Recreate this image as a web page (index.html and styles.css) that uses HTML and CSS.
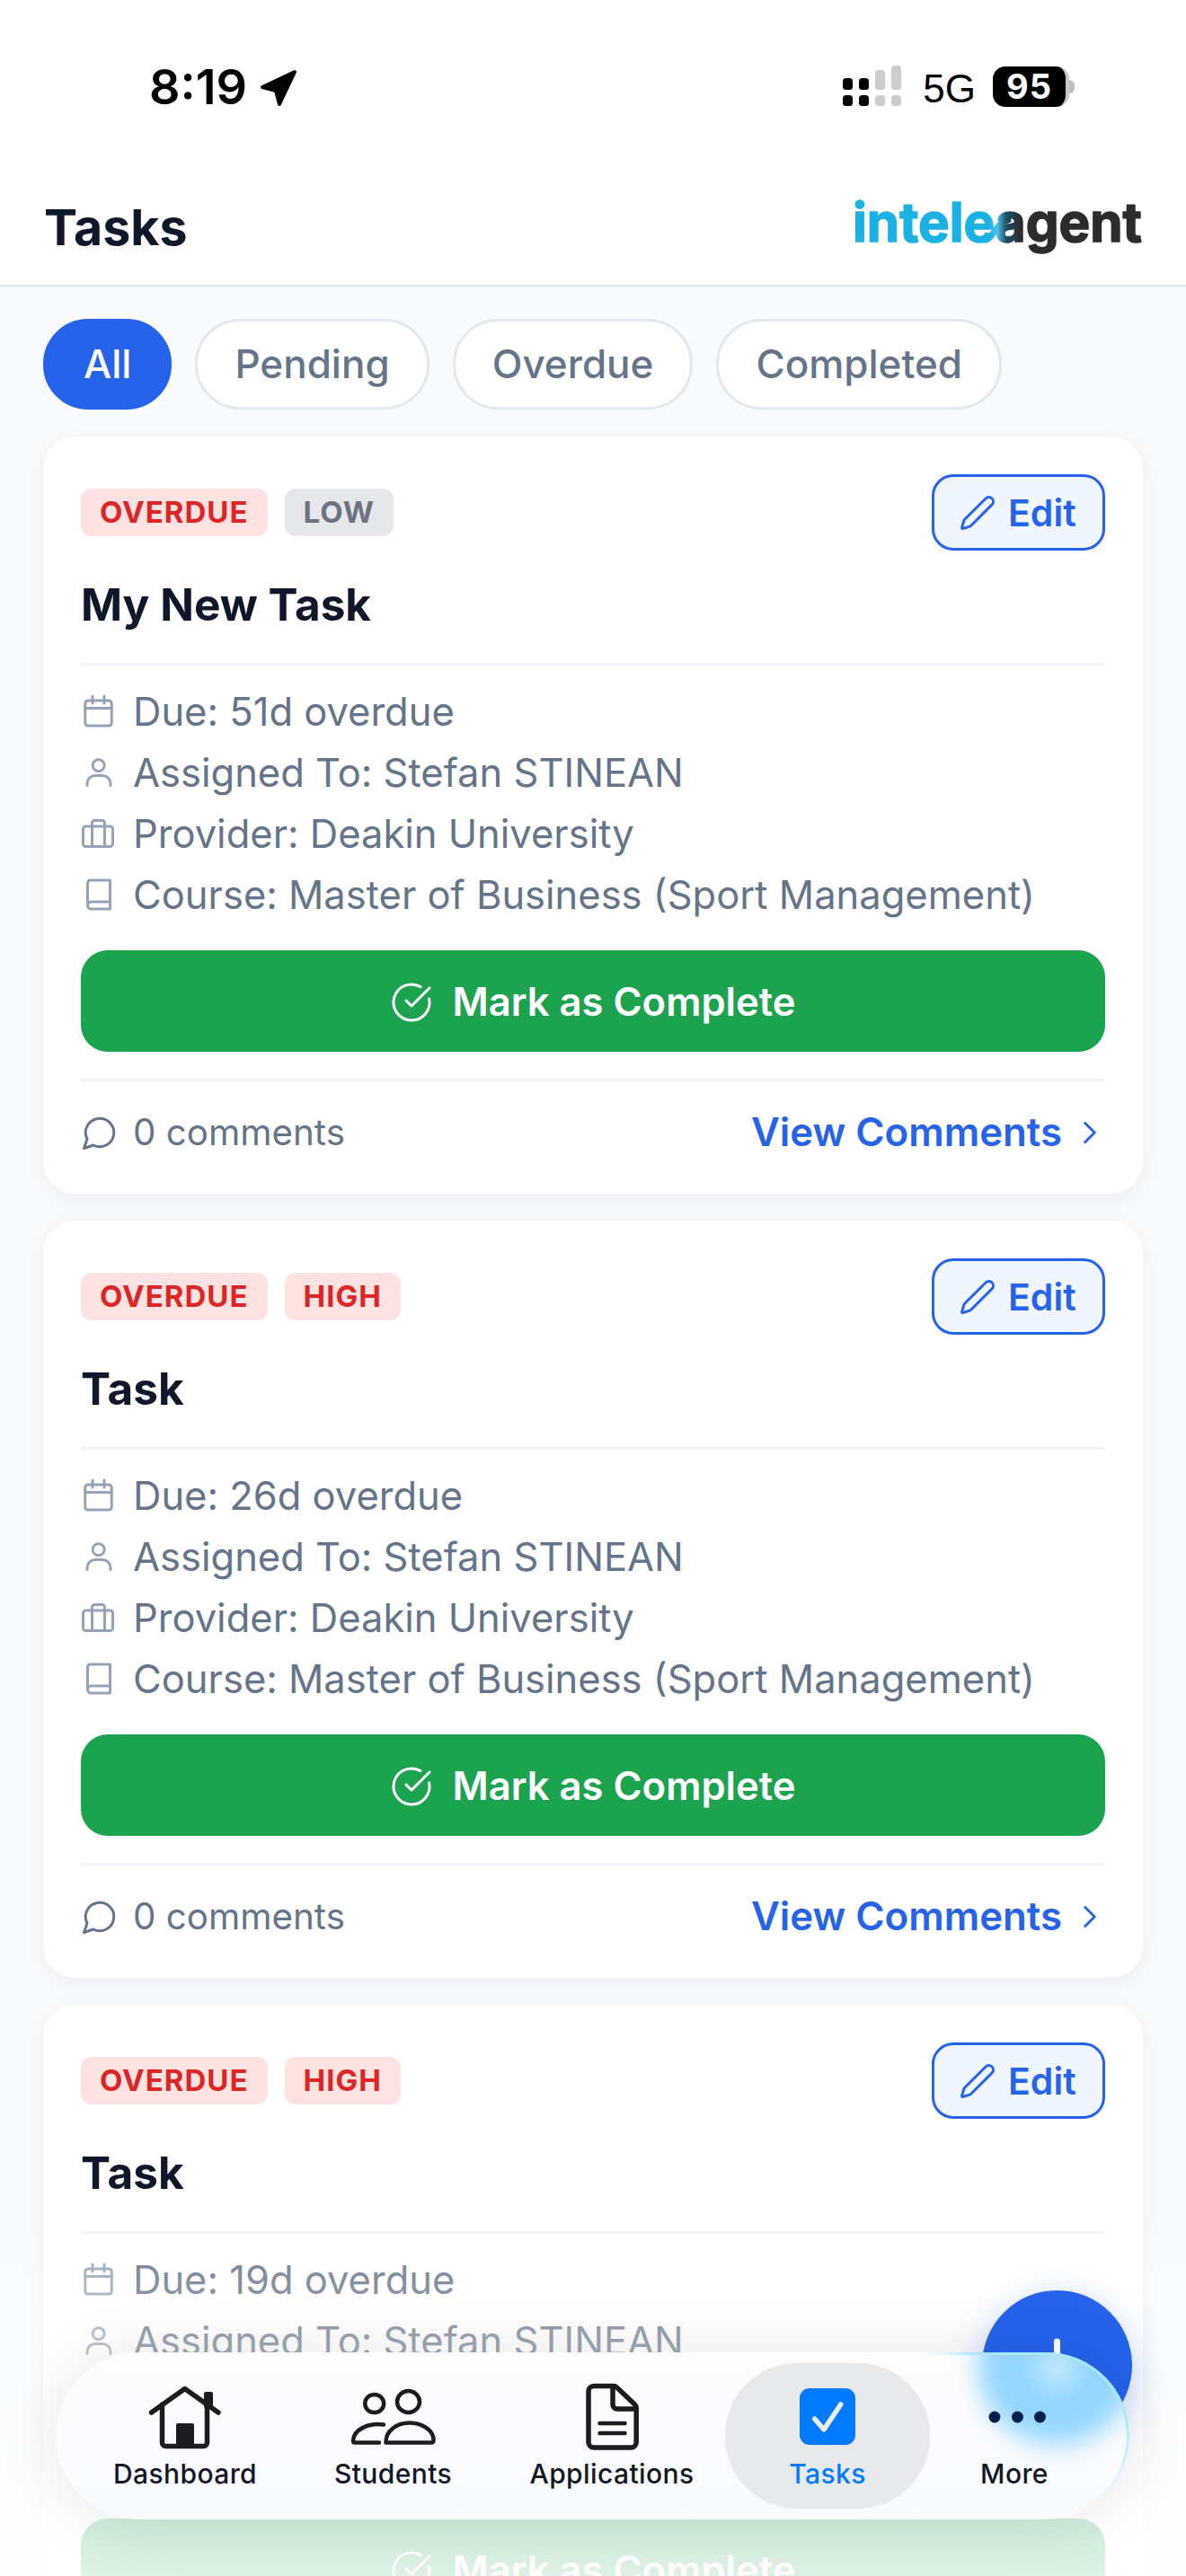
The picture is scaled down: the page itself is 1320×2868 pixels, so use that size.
FILE: index.html
```html
<!DOCTYPE html>
<html lang="en">
<head>
<meta charset="utf-8">
<title>Tasks</title>
<link rel="stylesheet" href="styles.css">
</head>
<body>
<div class="page">
  <header class="top">
    <div class="status">
      <div class="status-left">
        <span class="time">8:19</span>
        <svg class="loc" width="42" height="44" viewBox="0 0 42 44"><path d="M39 4 3 21l15 4 4 15z"/></svg>
      </div>
      <div class="status-right">
        <svg class="signal" width="65" height="46" viewBox="0 0 65 46">
          <rect class="on" x="0" y="14" width="11" height="13" rx="3.5"/><rect class="on" x="18" y="14" width="11" height="13" rx="3.5"/>
          <rect class="off" x="36" y="5" width="11" height="22" rx="3.5"/><rect class="off" x="54" y="0" width="11" height="27" rx="3.5"/>
          <rect class="on" x="0" y="33" width="11" height="12" rx="3.5"/><rect class="on" x="18" y="33" width="11" height="12" rx="3.5"/>
          <rect class="off" x="36" y="33" width="11" height="12" rx="3.5"/><rect class="off" x="54" y="33" width="11" height="12" rx="3.5"/>
        </svg>
        <span class="net">5G</span>
        <span class="battery"><span class="battery-level">95</span></span>
      </div>
    </div>
    <div class="titlebar">
      <h1 class="page-title">Tasks</h1>
      <svg class="logo" width="324" height="62" viewBox="0 0 324 62">
        <defs>
          <linearGradient id="logoGrad" gradientUnits="userSpaceOnUse" x1="0" y1="0" x2="324" y2="0">
            <stop offset="0" stop-color="#1cb1e3"/>
            <stop offset="0.47" stop-color="#1cb1e3"/>
            <stop offset="0.5" stop-color="#4fc3ea"/>
            <stop offset="0.53" stop-color="#1d4f66"/>
            <stop offset="0.58" stop-color="#2c2c2c"/>
            <stop offset="1" stop-color="#2c2c2c"/>
          </linearGradient>
        </defs>
        <text class="logo-text" x="1" y="47" textLength="322" lengthAdjust="spacingAndGlyphs" fill="url(#logoGrad)" stroke="url(#logoGrad)">inteleagent</text>
        <path class="logo-link" d="M148 45C157 46 160 25 174 23" stroke="url(#logoGrad)"/>
      </svg>
    </div>
  </header>

  <main class="content">
    <nav class="filters">
      <span class="pill pill-active">All</span>
      <span class="pill">Pending</span>
      <span class="pill">Overdue</span>
      <span class="pill">Completed</span>
    </nav>

    <article class="card">
      <div class="card-top">
        <div class="badges"><span class="badge badge-red">OVERDUE</span><span class="badge badge-grey">LOW</span></div>
        <button class="edit"><svg class="ico" width="42" height="42" viewBox="0 0 24 24"><path d="M21.174 6.812a1 1 0 0 0-3.986-3.987L3.842 16.174a2 2 0 0 0-.5.83l-1.321 4.352a.5.5 0 0 0 .623.622l4.353-1.32a2 2 0 0 0 .83-.497z"/></svg>Edit</button>
      </div>
      <h2 class="card-title">My New Task</h2>
      <div class="rule rule-title"></div>
      <ul class="meta">
        <li class="meta-row"><svg class="mi" width="42" height="42" viewBox="0 0 42 42"><rect x="4.8" y="9" width="29.4" height="28" rx="3"/><path d="M4.8 17.5h29.4M13 4v8M26 4v8"/></svg>Due: 51d overdue</li>
        <li class="meta-row"><svg class="mi" width="42" height="42" viewBox="0 0 42 42"><circle cx="19.7" cy="13.2" r="6.5"/><path d="M7 35.5v-2a9 9 0 0 1 9-9h8a9 9 0 0 1 9 9v2"/></svg>Assigned To: Stefan STINEAN</li>
        <li class="meta-row"><svg class="mi" width="42" height="42" viewBox="0 0 42 42"><rect x="2.5" y="13" width="33" height="22.5" rx="3"/><path d="M12.5 35.5V9.5a3 3 0 0 1 3-3h8a3 3 0 0 1 3 3v26"/></svg>Provider: Deakin University</li>
        <li class="meta-row"><svg class="mi" width="42" height="42" viewBox="0 0 42 42"><path d="M7.5 33V8a3 3 0 0 1 3-3h22v32H11.5a4 4 0 0 1-4-4 4 4 0 0 1 4-4h21"/></svg>Course: Master of Business (Sport Management)</li>
      </ul>
      <button class="complete"><svg class="ico" width="48" height="48" viewBox="0 0 24 24"><path d="M21.801 10A10 10 0 1 1 17 3.335"/><path d="m9 11 3 3L22 4"/></svg>Mark as Complete</button>
      <div class="rule rule-foot"></div>
      <div class="card-foot">
        <span class="comments"><svg class="ico" width="42" height="42" viewBox="0 0 24 24"><path d="M7.9 20A9 9 0 1 0 4 16.1L2 22Z"/></svg>0 comments</span>
        <span class="view">View Comments<svg class="ico" width="42" height="42" viewBox="0 0 24 24"><path d="m9 18 6-6-6-6"/></svg></span>
      </div>
    </article>

    <article class="card">
      <div class="card-top">
        <div class="badges"><span class="badge badge-red">OVERDUE</span><span class="badge badge-red">HIGH</span></div>
        <button class="edit"><svg class="ico" width="42" height="42" viewBox="0 0 24 24"><path d="M21.174 6.812a1 1 0 0 0-3.986-3.987L3.842 16.174a2 2 0 0 0-.5.83l-1.321 4.352a.5.5 0 0 0 .623.622l4.353-1.32a2 2 0 0 0 .83-.497z"/></svg>Edit</button>
      </div>
      <h2 class="card-title">Task</h2>
      <div class="rule rule-title"></div>
      <ul class="meta">
        <li class="meta-row"><svg class="mi" width="42" height="42" viewBox="0 0 42 42"><rect x="4.8" y="9" width="29.4" height="28" rx="3"/><path d="M4.8 17.5h29.4M13 4v8M26 4v8"/></svg>Due: 26d overdue</li>
        <li class="meta-row"><svg class="mi" width="42" height="42" viewBox="0 0 42 42"><circle cx="19.7" cy="13.2" r="6.5"/><path d="M7 35.5v-2a9 9 0 0 1 9-9h8a9 9 0 0 1 9 9v2"/></svg>Assigned To: Stefan STINEAN</li>
        <li class="meta-row"><svg class="mi" width="42" height="42" viewBox="0 0 42 42"><rect x="2.5" y="13" width="33" height="22.5" rx="3"/><path d="M12.5 35.5V9.5a3 3 0 0 1 3-3h8a3 3 0 0 1 3 3v26"/></svg>Provider: Deakin University</li>
        <li class="meta-row"><svg class="mi" width="42" height="42" viewBox="0 0 42 42"><path d="M7.5 33V8a3 3 0 0 1 3-3h22v32H11.5a4 4 0 0 1-4-4 4 4 0 0 1 4-4h21"/></svg>Course: Master of Business (Sport Management)</li>
      </ul>
      <button class="complete"><svg class="ico" width="48" height="48" viewBox="0 0 24 24"><path d="M21.801 10A10 10 0 1 1 17 3.335"/><path d="m9 11 3 3L22 4"/></svg>Mark as Complete</button>
      <div class="rule rule-foot"></div>
      <div class="card-foot">
        <span class="comments"><svg class="ico" width="42" height="42" viewBox="0 0 24 24"><path d="M7.9 20A9 9 0 1 0 4 16.1L2 22Z"/></svg>0 comments</span>
        <span class="view">View Comments<svg class="ico" width="42" height="42" viewBox="0 0 24 24"><path d="m9 18 6-6-6-6"/></svg></span>
      </div>
    </article>

    <article class="card">
      <div class="card-top">
        <div class="badges"><span class="badge badge-red">OVERDUE</span><span class="badge badge-red">HIGH</span></div>
        <button class="edit"><svg class="ico" width="42" height="42" viewBox="0 0 24 24"><path d="M21.174 6.812a1 1 0 0 0-3.986-3.987L3.842 16.174a2 2 0 0 0-.5.83l-1.321 4.352a.5.5 0 0 0 .623.622l4.353-1.32a2 2 0 0 0 .83-.497z"/></svg>Edit</button>
      </div>
      <h2 class="card-title">Task</h2>
      <div class="rule rule-title"></div>
      <ul class="meta">
        <li class="meta-row"><svg class="mi" width="42" height="42" viewBox="0 0 42 42"><rect x="4.8" y="9" width="29.4" height="28" rx="3"/><path d="M4.8 17.5h29.4M13 4v8M26 4v8"/></svg>Due: 19d overdue</li>
        <li class="meta-row"><svg class="mi" width="42" height="42" viewBox="0 0 42 42"><circle cx="19.7" cy="13.2" r="6.5"/><path d="M7 35.5v-2a9 9 0 0 1 9-9h8a9 9 0 0 1 9 9v2"/></svg>Assigned To: Stefan STINEAN</li>
        <li class="meta-row"><svg class="mi" width="42" height="42" viewBox="0 0 42 42"><rect x="2.5" y="13" width="33" height="22.5" rx="3"/><path d="M12.5 35.5V9.5a3 3 0 0 1 3-3h8a3 3 0 0 1 3 3v26"/></svg>Provider: Deakin University</li>
        <li class="meta-row"><svg class="mi" width="42" height="42" viewBox="0 0 42 42"><path d="M7.5 33V8a3 3 0 0 1 3-3h22v32H11.5a4 4 0 0 1-4-4 4 4 0 0 1 4-4h21"/></svg>Course: Master of Business (Sport Management)</li>
      </ul>
      <button class="complete"><svg class="ico" width="48" height="48" viewBox="0 0 24 24"><path d="M21.801 10A10 10 0 1 1 17 3.335"/><path d="m9 11 3 3L22 4"/></svg>Mark as Complete</button>
    </article>
  </main>

  <div class="fade"></div>

  <button class="fab"><svg width="167" height="167" viewBox="0 0 167 167"><path d="M83.5 57v53M57 83.5h53"/></svg></button>

  <nav class="tabbar">
    <div class="glow"></div>
    <div class="glow-spot"></div>
    <div class="rim"></div>
    <div class="tabs">
      <div class="tab">
        <svg class="tab-icon" width="100" height="76" viewBox="0 0 100 76">
          <path class="ts" d="M12.5 33 49.7 6.5 87 33"/>
          <path class="ts" d="M24.5 24v42.5a4 4 0 0 0 4 4h42a4 4 0 0 0 4-4V24"/>
          <rect class="tf" x="71" y="10" width="10" height="18" rx="2"/>
          <rect class="tf" x="40" y="45" width="20" height="25" rx="2"/>
        </svg>
        <span class="tab-label">Dashboard</span>
      </div>
      <div class="tab">
        <svg class="tab-icon" width="100" height="76" viewBox="0 0 100 76">
          <ellipse class="ts thin" cx="28.7" cy="23" rx="10.5" ry="10"/>
          <ellipse class="ts thin" cx="66.5" cy="21" rx="12.5" ry="12"/>
          <path class="ts thin" d="M39 46.5C22 44 5.500 52 5 64.500q0 2 2 2H34"/>
          <path class="ts thin" d="M41.500 66.500C41 53 54 44.500 68 44.500 82 44.500 95 53 94.500 64q0 2.500-2.500 2.500Z"/>
        </svg>
        <span class="tab-label">Students</span>
      </div>
      <div class="tab">
        <svg class="tab-icon" width="100" height="76" viewBox="0 0 100 76">
          <path class="ts" d="M30 3.500H52a5 5 0 0 1 3.500 1.500L75.500 24a6 6 0 0 1 1.700 4V66a6 6 0 0 1-6 6H30a6 6 0 0 1-6-6V9.500a6 6 0 0 1 6-6Z"/>
          <path class="ts" d="M51 5V24a5 5 0 0 0 5 5H76"/>
          <path class="ts thin" d="M36.500 45H64.500M36.500 56H64.500"/>
        </svg>
        <span class="tab-label">Applications</span>
      </div>
      <div class="tab tab-active">
        <svg class="tab-icon" width="100" height="76" viewBox="0 0 100 76">
          <rect x="19" y="6" width="62" height="63" rx="11" fill="#007aff"/>
          <path class="check" d="M35.700 40 46 52 64.700 24"/>
        </svg>
        <span class="tab-label">Tasks</span>
      </div>
      <div class="tab">
        <svg class="tab-icon tab-more" width="100" height="76" viewBox="0 0 100 76">
          <circle cx="28" cy="38" r="6.500"/><circle cx="53.500" cy="38" r="6.500"/><circle cx="78.500" cy="38" r="6.500"/>
        </svg>
        <span class="tab-label">More</span>
      </div>
    </div>
  </nav>
</div>
</body>
</html>
```

FILE: styles.css
```css
* { box-sizing: border-box; }
html, body { margin: 0; padding: 0; width: 1320px; height: 2868px; overflow: hidden; }
body { font-family: "Inter", "Liberation Sans", sans-serif; background: #f8fafc; color: #0f172a; }
button { font-family: inherit; border: 0; padding: 0; margin: 0; }
ul { list-style: none; margin: 0; padding: 0; }
h1, h2 { margin: 0; }

.page { position: relative; width: 1320px; height: 2868px; overflow: hidden; }

/* header */
.top { background: #fff; border-bottom: 2px solid #e2e8f0; height: 319px; }
.status { display: flex; justify-content: space-between; padding: 74px 130px 0 166px; height: 120px; }
.status-left { display: flex; align-items: flex-start; gap: 14px; height: 46px; }
.time { font-size: 54px; font-weight: 600; line-height: 46px; color: #000; }
.loc { fill: #000; stroke: #000; stroke-width: 4; stroke-linejoin: round; margin-top: 2px; }
.status-right { display: flex; align-items: flex-start; height: 46px; }
.signal { margin-top: -1px; }
.signal .on { fill: #000; }
.signal .off { fill: #cccccc; }
.net { font-family: "Liberation Sans", sans-serif; font-size: 44px; line-height: 46px; color: #000; margin-left: 24px; margin-top: 2px; }
.battery { display: block; position: relative; margin-left: 19px; width: 85px; height: 45px; background: #000; border-radius: 14px; border-right: 4px solid #c8c8c8; }
.battery::after { content: ""; position: absolute; left: 85px; top: 15px; width: 6px; height: 15px; background: #bdbdbd; border-radius: 0 6px 6px 0; }
.battery-level { display: block; color: #fff; font-size: 38px; font-weight: 700; line-height: 44px; text-align: center; letter-spacing: 1px; }

.titlebar { display: flex; justify-content: space-between; align-items: flex-start; padding: 98px 48px 0 49px; height: 197px; }
.page-title { font-size: 55.5px; line-height: 70px; font-weight: 700; color: #0f172a; }
.logo { margin-top: 4px; display: block; }
.logo-text { font-family: "Inter", "Liberation Sans", sans-serif; font-size: 60px; font-weight: 700; stroke-width: 1.5; stroke-linejoin: round; }
.logo-link { fill: none; stroke-width: 7; stroke-linecap: round; }

/* filters */
.content { padding: 36px 48px 0; }
.filters { display: flex; gap: 26px; }
.pill { display: block; height: 101px; line-height: 95px; padding: 0 41px; border: 3px solid #e2e8f0; background: #fff; border-radius: 50px; font-size: 44px; font-weight: 500; color: #64748b; }
.pill-active { background: #2563eb; border-color: #2563eb; color: #fff; padding: 0 42px; }

/* cards */
.card { background: #fff; border-radius: 36px; padding: 42px; margin-top: 30px; box-shadow: 0 6px 24px rgba(15, 23, 42, .05); height: 843px; }
.card-top { display: flex; justify-content: space-between; align-items: center; height: 85px; }
.badges { display: flex; gap: 19px; }
.badge { display: block; height: 53px; line-height: 53px; padding: 0 21px; border-radius: 12px; font-size: 33px; font-weight: 700; letter-spacing: 1px; }
.badge-red { background: #fee2e2; color: #dc2626; }
.badge-grey { background: #e5e7eb; color: #6b7280; }

.ico { fill: none; stroke: currentColor; stroke-width: 1.7; stroke-linecap: round; stroke-linejoin: round; flex: none; }
.edit { display: flex; align-items: center; gap: 13px; height: 85px; width: 193px; padding-left: 27px; background: #eff6ff; border: 3px solid #2563eb; border-radius: 24px; color: #2563eb; font-size: 41px; font-weight: 600; }

.card-title { font-size: 49.5px; line-height: 60px; font-weight: 700; margin-top: 30px; color: #0f172a; }
.rule { height: 3px; background: #f1f5f9; }
.rule-title { margin-top: 35px; }
.rule-foot { margin-top: 30px; }

.meta { margin-top: 17px; }
.meta-row { display: flex; align-items: center; height: 68px; gap: 16px; font-size: 43.5px; color: #64748b; }
.mi { fill: none; stroke: #94a3b8; stroke-width: 3; stroke-linecap: round; stroke-linejoin: round; flex: none; }

.complete { display: flex; align-items: center; justify-content: center; gap: 21px; width: 100%; height: 113px; padding-top: 2px; margin-top: 28px; background: #1ba34d; border-radius: 30px; color: #fff; font-size: 43.6px; font-weight: 600; }
.complete .ico { stroke-width: 1.5; }

.card-foot { display: flex; justify-content: space-between; align-items: center; height: 53px; margin-top: 30px; }
.comments { display: flex; align-items: center; gap: 16px; font-size: 40.3px; color: #64748b; }
.view { display: flex; align-items: center; gap: 10px; font-size: 43.8px; font-weight: 600; color: #2563eb; margin-right: -4px; }

/* bottom overlays */
.fade { position: absolute; left: 0; right: 0; top: 2450px; bottom: 0; background: linear-gradient(to bottom, rgba(255,255,255,0), rgba(255,255,255,.8) 85%, rgba(255,255,255,.86)); }

.fab { position: absolute; left: 1093px; top: 2550px; width: 167px; height: 167px; border-radius: 50%; background: #2563eb; box-shadow: 0 10px 40px rgba(37, 99, 235, .3); }
.fab svg { display: block; fill: none; stroke: #fff; stroke-width: 7; stroke-linecap: round; }

.tabbar { position: absolute; left: 62px; top: 2619px; width: 1195px; height: 186px; border-radius: 93px; overflow: hidden; background: linear-gradient(to bottom, #fdfdfe, #fafbfe 70%, #f7fcfd); }
.page::after { content: ""; position: absolute; left: 62px; top: 2619px; width: 1195px; height: 186px; border-radius: 93px; box-shadow: 0 2px 70px rgba(15, 23, 42, .1); pointer-events: none; }
.glow { position: absolute; left: 1026px; top: -73px; width: 176px; height: 176px; border-radius: 50%; background: #93d6ff; filter: blur(14px); }
.glow-spot { position: absolute; left: 1074px; top: -22px; width: 80px; height: 80px; border-radius: 50%; background: radial-gradient(circle, rgba(255,255,255,.4), rgba(255,255,255,0) 70%); }
.rim { position: absolute; inset: 0; border-radius: 93px; border: 3px solid #a6e8ff; -webkit-mask-image: radial-gradient(circle at 1115px 30px, #000 0, #000 90px, transparent 150px); mask-image: radial-gradient(circle at 1115px 30px, #000 0, #000 90px, transparent 150px); }

.tabs { position: relative; display: grid; grid-template-columns: 228px 235px 252px 228px 188px; padding: 12px 34px 12px 30px; height: 186px; }
.tab { display: flex; flex-direction: column; align-items: center; padding-top: 22px; border-radius: 80px; }
.tab-active { background: #e8e9eb; }
.tab-icon { display: block; flex: none; }
.ts { fill: none; stroke: #1c1c1e; stroke-width: 5.500; stroke-linecap: round; stroke-linejoin: round; }
.ts.thin { stroke-width: 4.500; }
.tf { fill: #1c1c1e; }
.check { fill: none; stroke: #ececee; stroke-width: 5.500; stroke-linecap: round; stroke-linejoin: round; }
.tab-more { fill: #00204d; }
.tab-label { display: block; margin-top: 7px; font-size: 30px; line-height: 36px; font-weight: 500; letter-spacing: .4px; color: #111827; }
.tab-active .tab-label { color: #007aff; }
```
